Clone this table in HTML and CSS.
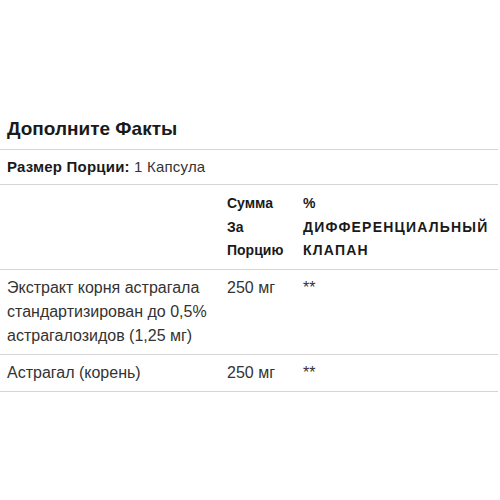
FILE: index.html
```html
<!DOCTYPE html>
<html lang="ru">
<head>
<meta charset="utf-8">
<link rel="stylesheet" href="styles.css">
</head>
<body>
<div class="facts">
  <h2 class="title">Дополните Факты</h2>
  <div class="serving"><b>Размер Порции:</b> 1 Капсула</div>
  <table class="tbl">
    <colgroup><col class="c1"><col class="c2"><col class="c3"></colgroup>
    <thead>
      <tr><th></th><th>Сумма За Порцию</th><th class="dv">%<br>ДИФФЕРЕНЦИАЛЬНЫЙ КЛАПАН</th></tr>
    </thead>
    <tbody>
      <tr><td>Экстракт корня астрагала стандартизирован до 0,5% астрагалозидов (1,25 мг)</td><td>250 мг</td><td>**</td></tr>
      <tr><td>Астрагал (корень)</td><td>250 мг</td><td>**</td></tr>
    </tbody>
  </table>
</div>
</body>
</html>
```
FILE: styles.css
```css
html, body { margin: 0; padding: 0; background: #fff; }
body { font-family: "Liberation Sans", Arial, sans-serif; color: #333; }
.facts { width: 498px; padding-top: 117px; }
.title {
  margin: 0;
  font-size: 19px;
  line-height: 24px;
  font-weight: bold;
  color: #1a1a1a;
  padding: 0 7px 8px;
  border-bottom: 1px solid #d4d4d4;
}
.serving {
  font-size: 15px;
  line-height: 24px;
  padding: 5px 7px 5px;
  border-bottom: 1px solid #d4d4d4;
  letter-spacing: 0.2px;
}
.serving b { color: #1a1a1a; }
.tbl { width: 498px; border-collapse: collapse; table-layout: fixed; font-size: 16px; line-height: 24px; }
.c1 { width: 220px; }
.c2 { width: 76px; }
.tbl th, .tbl td {
  text-align: left;
  vertical-align: top;
  padding: 6px 7px;
  border-bottom: 1px solid #d4d4d4;
}
.tbl th { font-weight: bold; color: #1a1a1a; font-size: 14px; line-height: 23.5px; padding-top: 7px; padding-bottom: 6px; }
.tbl th.dv { letter-spacing: 1.2px; padding-right: 0; }
.tbl td:first-child, .tbl th:first-child { padding-right: 2px; }
```
